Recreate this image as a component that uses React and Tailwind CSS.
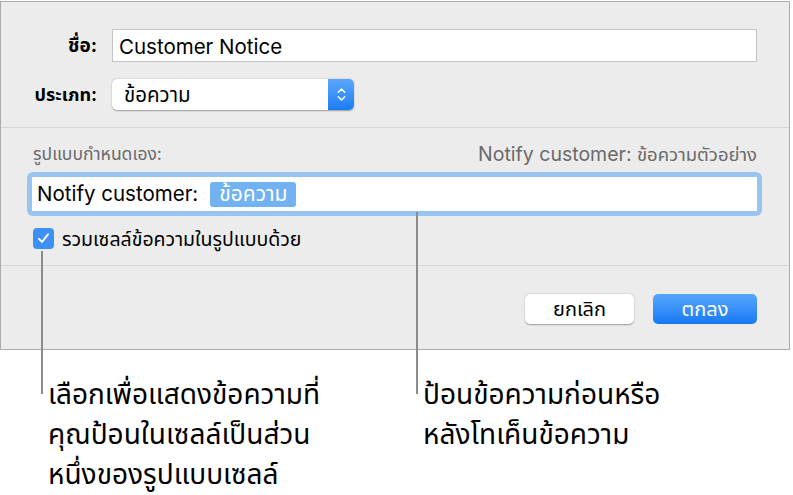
import { useState } from "react";

const fontStack = { fontFamily: 'Inter, "Noto Sans Thai", "Noto Sans", sans-serif' };

// Small check glyph for the checkbox
const CheckMark = () => (
  <svg viewBox="0 0 20 20" className="w-[15px] h-[15px]">
    <path d="M4 10.5 L8 14.5 L16 4.5" fill="none" stroke="white" strokeWidth="2.6" strokeLinecap="round" strokeLinejoin="round" />
  </svg>
);

// Up/down chevrons of the popup button
const Stepper = () => (
  <svg viewBox="0 0 12 20" className="w-[11px] h-[19px]">
    <path d="M2.5 7.5 L6 4 L9.5 7.5" fill="none" stroke="white" strokeWidth="1.6" strokeLinecap="round" strokeLinejoin="round" />
    <path d="M2.5 12.5 L6 16 L9.5 12.5" fill="none" stroke="white" strokeWidth="1.6" strokeLinecap="round" strokeLinejoin="round" />
  </svg>
);

const App = () => {
  const [checked, setChecked] = useState(true);

  return (
    <div className="relative w-[793px] h-[495px] bg-white overflow-hidden text-black" style={fontStack}>
      {/* Dialog panel */}
      <div className="mt-px w-[790px] h-[349px] border border-[#ababab] bg-[#ececec] flex flex-col">
        {/* Name + type */}
        <div className="pt-[27px] flex flex-col">
          <div className="flex items-center h-[33px]">
            <div className="w-[96px] text-right text-[19px] font-bold leading-[24px]">ชื่อ:</div>
            <div className="ml-[15px] w-[645px] h-[33px] bg-white border border-[#c4c4c4] flex items-center px-[6px] pt-[2px] text-[20.5px] leading-[24px]">
              Customer Notice
            </div>
          </div>
          <div className="flex items-center mt-[17px] h-[31px]">
            <div className="w-[96px] text-right text-[18px] font-bold leading-[24px]">ประเภท:</div>
            <div className="ml-[15px] w-[242px] h-[31px] bg-white rounded-[5px] shadow-[0_0.5px_1.5px_rgba(0,0,0,0.35)] flex items-center">
              <span className="flex-1 pl-[12px] text-[20.5px] leading-[24px]">ข้อความ</span>
              <div className="w-[26px] h-full rounded-r-[5px] bg-gradient-to-b from-[#5aa8fa] to-[#1a7cf4] flex items-center justify-center">
                <Stepper />
              </div>
            </div>
          </div>
        </div>

        <div className="mt-[17px] h-px bg-[#d6d6d6]" />

        {/* Custom format */}
        <div className="flex flex-col px-[26px]">
          <div className="mt-[16px] h-[20px] flex justify-between items-center text-[19.5px] leading-[20px] text-[#6a6a6a] px-[6px]">
            <span className="text-[17.5px]">รูปแบบกำหนดเอง:</span>
            <span>
              Notify customer: <span className="text-[18.5px]">ข้อความตัวอย่าง</span>
            </span>
          </div>
          <div className="mt-[8px] w-[735px] h-[44px] p-[5px] rounded-[6px] bg-[#98c4f2]">
            <div className="h-[34px] bg-white flex items-center px-[5px] gap-[12px]">
              <span className="text-[20.5px] leading-[24px]">Notify customer:</span>
              <span className="h-[25px] px-[9px] rounded-[3px] bg-[#72b2f2] text-white text-[21px] leading-[24px] flex items-center">ข้อความ</span>
            </div>
          </div>
          <label className="mt-[12px] ml-[6px] h-[21px] flex items-center gap-[8px] text-[19.5px] leading-[22px] cursor-pointer">
            <span
              onClick={() => setChecked(!checked)}
              className={`w-[21px] h-[21px] rounded-[4px] flex items-center justify-center ${checked ? "bg-[#3d91f5]" : "bg-white border border-[#aaa]"}`}
            >
              {checked && <CheckMark />}
            </span>
            <span>รวมเซลล์ข้อความในรูปแบบด้วย</span>
          </label>
        </div>

        <div className="mt-[16px] h-px bg-[#d6d6d6]" />

        {/* Buttons */}
        <div className="mt-[28px] flex justify-end gap-[19px] pr-[32px]">
          <button className="w-[109px] h-[30px] bg-white rounded-[5px] shadow-[0_0.5px_1.5px_rgba(0,0,0,0.35)] text-[20px] leading-[24px]">
            ยกเลิก
          </button>
          <button className="w-[104px] h-[30px] rounded-[5px] bg-gradient-to-b from-[#55a5fa] to-[#1479f5] text-white text-[20px] leading-[24px]">
            ตกลง
          </button>
        </div>
      </div>

      {/* Callout lines */}
      <div className="absolute left-[41px] top-[251px] w-[2px] h-[143px] bg-[#8c8c8c]" />
      <div className="absolute left-[416px] top-[212px] w-[2px] h-[182px] bg-[#8c8c8c]" />

      {/* Callout text */}
      <div className="flex mt-[24px] text-[28px] leading-[40px]">
        <div className="ml-[48px] w-[330px]">
          <div>เลือกเพื่อแสดงข้อความที่</div>
          <div>คุณป้อนในเซลล์เป็นส่วน</div>
          <div>หนึ่งของรูปแบบเซลล์</div>
        </div>
        <div className="ml-[45px]">
          <div>ป้อนข้อความก่อนหรือ</div>
          <div>หลังโทเค็นข้อความ</div>
        </div>
      </div>
    </div>
  );
};

export default App;
